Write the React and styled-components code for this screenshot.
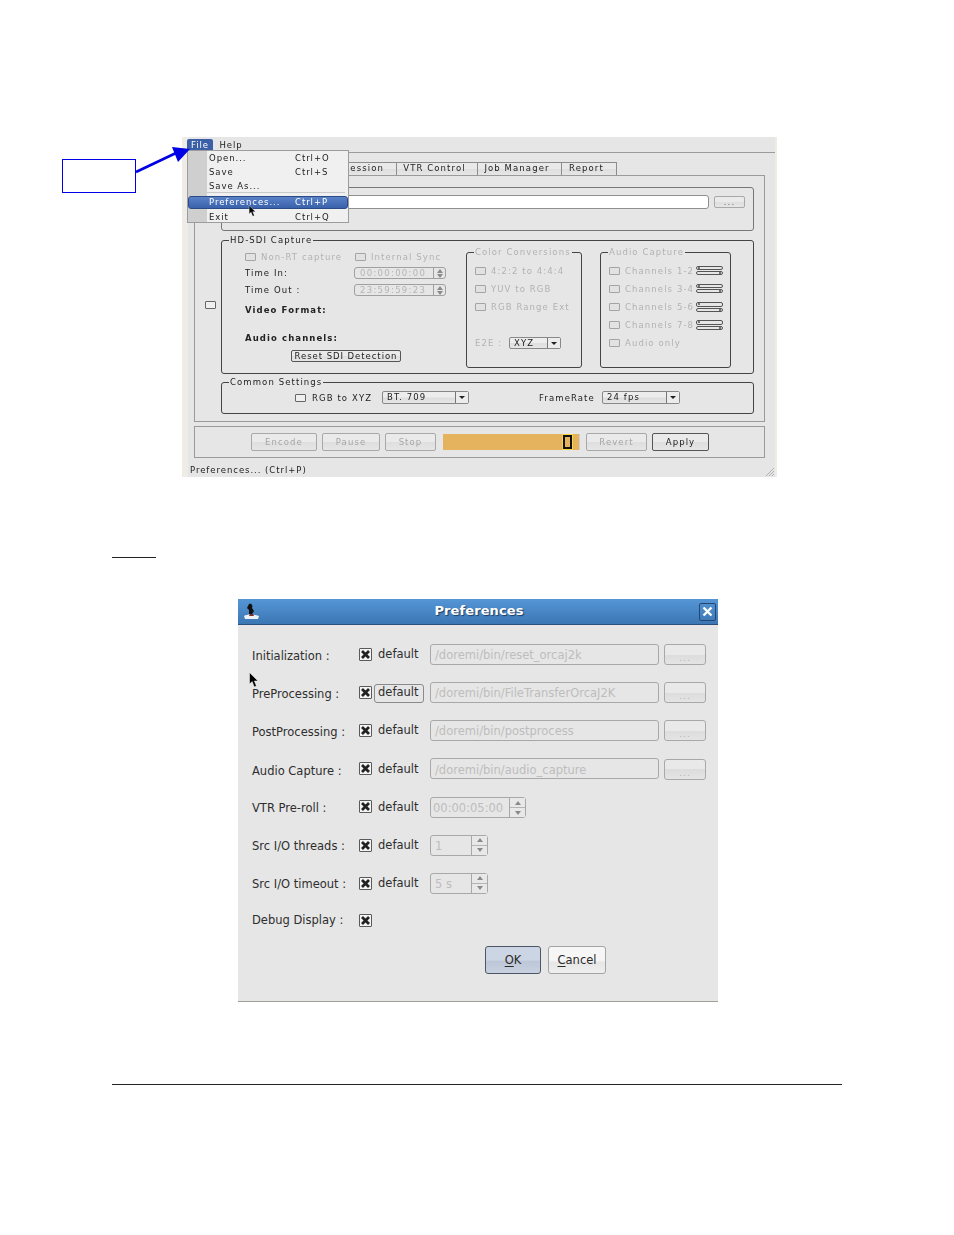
import React from 'react';
import styled, { createGlobalStyle } from 'styled-components';

const Global = createGlobalStyle`
  * { box-sizing: border-box; }
  html, body { margin: 0; padding: 0; background: #fff; }
`

const Page = styled.div`
  position: relative;
  width: 954px;
  height: 1235px;
  padding-top: 137px;
  background: #fff;
  font-family: "DejaVu Sans", sans-serif;
  overflow: hidden;
`

const TopRow = styled.div`
  display: flex;
  align-items: flex-start;
`

const Callout = styled.div`
  width: 74px;
  height: 34px;
  margin: 22px 46px 0 62px;
  border: 1px solid #0000e6;
`

const ArrowSvg = styled.svg`
  position: absolute;
  left: 130px;
  top: 140px;
  z-index: 5;
`

/* old qt app window, text is a bit soft because the shot was scaled */
const AppWindow = styled.div`
  position: relative;
  width: 595px;
  height: 340px;
  background: #e6e6e6;
  border-left: 6px solid #efece7;
  border-right: 2px solid #efece7;
  font-size: 8.5px;
  letter-spacing: 1.1px;
  color: #1c1c1c;
  filter: blur(0.3px);
`

const MenuBar = styled.div`
  display: flex;
  height: 16px;
  margin-left: 2px;
  padding-top: 2px;
  border-bottom: 1px solid #9b9b9b;
  letter-spacing: 0.95px;
`

const MenuTitle = styled.div`
  display: flex;
  align-items: center;
  justify-content: center;
  width: ${p => p.$w}px;
  height: 12px;
  margin-left: ${p => p.$ml || 0}px;
  border-radius: 2px 2px 0 0;
  background: ${p => (p.$active ? '#3b60a8' : 'transparent')};
  color: ${p => (p.$active ? '#fff' : '#222')};
`

const TabBar = styled.div`
  display: flex;
  height: 13px;
  margin-top: 9px;
  padding-left: 127px;
`

const Tab = styled.div`
  display: flex;
  align-items: center;
  justify-content: ${p => (p.$first ? 'flex-end' : 'center')};
  width: ${p => p.$w}px;
  height: 13px;
  padding: 0 ${p => (p.$first ? 12 : 5)}px 2px 0;
  border: 1px solid #8c8c8c;
  border-bottom: 0;
  border-left-width: ${p => (p.$first ? 1 : 0)}px;
  background: linear-gradient(#e9e9e9 50%, #dedede 50%, #e6e6e6);
`

const Pane = styled.div`
  display: flex;
  width: 571px;
  height: 247px;
  margin-left: 6px;
  border: 1px solid #9a9a9a;
`

const SideCol = styled.div`
  width: 26px;
  padding: 125px 0 0 10px;
`

const Stack = styled.div`
  display: flex;
  flex-direction: column;
  width: 533px;
  padding-top: 11px;
`

const Group = styled.div`
  position: relative;
  display: flex;
  width: ${p => (p.$w ? `${p.$w}px` : 'auto')};
  height: ${p => p.$h}px;
  margin-top: ${p => p.$mt || 0}px;
  border: 1px solid ${p => p.$line || '#444'};
  border-radius: 3px;
`

const Legend = styled.span`
  position: absolute;
  top: -6px;
  left: 7px;
  padding: 0 1px;
  background: #e6e6e6;
  line-height: 10px;
  white-space: nowrap;
  color: ${p => (p.$off ? '#b2b2b2' : '#222')};
`

const PathRow = styled.div`
  display: flex;
  align-items: flex-start;
  gap: 5px;
  padding: 7px 0 0 60px;
`

const PathInput = styled.div`
  width: 427px;
  height: 14px;
  background: #fff;
  border: 1px solid #8f8f8f;
  border-radius: 3px;
`

const SmallButton = styled.div`
  display: flex;
  align-items: center;
  justify-content: center;
  width: ${p => p.$w || 31}px;
  height: ${p => p.$h || 12}px;
  margin-top: ${p => p.$mt || 0}px;
  margin-left: ${p => p.$ml || 0}px;
  border: 1px solid ${p => (p.$off ? '#a8a8a8' : '#555')};
  border-radius: 2px;
  color: ${p => (p.$off ? '#a6a6a6' : '#1c1c1c')};
  background: linear-gradient(#eaeaea 50%, #dedede 50%, #e6e6e6);
  white-space: nowrap;
`

const Dots = styled.span`
  color: #666;
`

const ResetButton = styled(SmallButton)`
  letter-spacing: 0.95px;
`

const CaptureCol = styled.div`
  width: 244px;
  padding: 8px 0 0 23px;
`

const FormRow = styled.div`
  display: flex;
  align-items: center;
  height: ${p => p.$h || 16}px;
  margin-top: ${p => p.$mt || 0}px;
  padding-left: ${p => p.$pl || 0}px;
  white-space: nowrap;
`

const Cell = styled.span`
  display: flex;
  align-items: center;
  width: ${p => p.$w}px;
  margin-left: ${p => p.$ml || 0}px;
  color: ${p => (p.$off ? '#b2b2b2' : '#222')};
`

const BoldText = styled.span`
  font-weight: bold;
  color: #222;
`

const TinyCheck = styled.span`
  display: block;
  flex: none;
  width: 11px;
  height: 8px;
  margin-right: ${p => p.$gap || 5}px;
  border: 1px solid ${p => (p.$off ? '#a4a4a4' : '#666')};
  border-radius: 1px;
  background: ${p => (p.$off ? '#e2e2e2' : '#efefef')};
`

const TimeBox = styled.div`
  display: flex;
  width: 92px;
  height: 12px;
  border: 1px solid #a0a0a0;
  border-radius: 3px;
`

const TimeText = styled.span`
  flex: 1;
  padding-left: 5px;
  line-height: 10px;
  letter-spacing: 1.3px;
  color: #b4b4b4;
`

const TinyArrows = styled.span`
  display: flex;
  flex-direction: column;
  justify-content: space-around;
  align-items: center;
  width: 12px;
  border-left: 1px solid #a0a0a0;
  color: #333;
`

const CaptureBox = styled(Group)`
  flex-direction: column;
  margin-top: 11px;
  margin-left: ${p => p.$ml || 0}px;
  padding: 9px 0 0 8px;
`

const ChannelLabel = styled.span`
  width: 71px;
  color: #b2b2b2;
`

const Combo = styled.div`
  display: flex;
  width: ${p => p.$w}px;
  height: ${p => p.$h || 13}px;
  margin-left: ${p => p.$ml || 0}px;
  border: 1px solid #888;
  border-radius: 2px;
  background: linear-gradient(#ededed 45%, #dedede 55%, #e6e6e6);
`

const ComboText = styled.span`
  flex: 1;
  padding-left: 4px;
  line-height: 11px;
`

const ComboDrop = styled.span`
  display: flex;
  align-items: center;
  justify-content: center;
  width: 13px;
  border-left: 1px solid #777;
  background: #ececec;
`

const DropTri = styled.span`
  width: 0;
  height: 0;
  border-left: 3px solid transparent;
  border-right: 3px solid transparent;
  border-top: 3px solid #222;
`

const ControlBar = styled.div`
  display: flex;
  align-items: center;
  width: 571px;
  height: 32px;
  margin: 4px 0 0 6px;
  padding-left: 56px;
  border: 1px solid #9a9a9a;
`

const ActionButton = styled(SmallButton)`
  height: 18px;
  margin-left: ${p => p.$ml || 0}px;
`

const Progress = styled.div`
  display: flex;
  align-items: center;
  justify-content: flex-end;
  width: 137px;
  height: 16px;
  margin-left: 7px;
  padding-right: 7px;
  background: #e5b25d;
  border-right: 1px solid #cfcfcf;
`

const Marker = styled.span`
  width: 9px;
  height: 14px;
  border: 2px solid #111;
  outline: 1px solid #f5d63c;
  background: #e5b25d;
`

const StatusBar = styled.div`
  display: flex;
  align-items: center;
  height: 19px;
  margin-top: 2px;
  padding-left: 2px;
  letter-spacing: 0.95px;
`

const Grip = styled.svg`
  position: absolute;
  right: 0;
  bottom: 0;
`

const MenuPanel = styled.div`
  position: absolute;
  top: 13px;
  left: -1px;
  z-index: 3;
  width: 162px;
  height: 73px;
  background: linear-gradient(to right, #cfcfcf 19px, #f0f0f0 19px);
  border: 1px solid #9c9c9c;
  letter-spacing: 0.95px;
`

const MenuItem = styled.div`
  display: flex;
  align-items: center;
  height: ${p => p.$h || 14}px;
  padding-left: 21px;
  white-space: nowrap;
`

const MenuLabel = styled.span`
  width: 86px;
`

const MenuSep = styled.div`
  height: 1px;
  margin: 0 3px 3px 19px;
  background: #c9c9c9;
`

const MenuHot = styled(MenuItem)`
  height: 13px;
  margin-bottom: 1px;
  padding: 0 0 1px 20px;
  border: 1px solid #2c4a86;
  border-radius: 3px;
  color: #fff;
  background: linear-gradient(#5a82c8, #3a62ac);
`

const MouseSvg = styled.svg`
  position: absolute;
  left: ${p => p.$x}px;
  top: ${p => p.$y}px;
  z-index: 4;
`

const ShortRule = styled.div`
  width: 44px;
  height: 1px;
  margin: 80px 0 0 112px;
  background: #222;
`

const Dialog = styled.div`
  position: relative;
  width: 480px;
  height: 403px;
  margin: 41px 0 0 238px;
  background: #e6e6e6;
  border-bottom: 1px solid #a3a097;
  font-size: 11.5px;
  color: #2e2e2e;
`

const TitleBar = styled.div`
  display: flex;
  align-items: center;
  height: 26px;
  padding: 0 2px 0 5px;
  background: linear-gradient(#5596d6, #3c76b4);
  border-bottom: 1px solid #2b4f7c;
`

const Title = styled.span`
  flex: 1;
  padding: 0 2px 2px 0;
  text-align: center;
  font-weight: bold;
  font-size: 13px;
  letter-spacing: 0.1px;
  color: #fff;
  text-shadow: 1px 1px 1px #1d3c62;
`

const CloseBox = styled.span`
  display: flex;
  align-items: center;
  justify-content: center;
  width: 17px;
  height: 18px;
  border: 1px solid #24466f;
  border-radius: 2px;
`

const Rows = styled.div`
  padding: 10px 12px 0 14px;
`

const Row = styled.div`
  display: flex;
  align-items: center;
  height: ${p => p.$h || 38.2}px;
`

const RowLabel = styled.span`
  width: 107px;
  padding-top: ${p => p.$drop || 0}px;
  white-space: nowrap;
`

const XBox = styled.span`
  display: flex;
  align-items: center;
  justify-content: center;
  flex: none;
  width: 13px;
  height: 13px;
  border: 1px solid #5a5a5a;
  border-radius: 1px;
  background: #f4f4f4;
`

const DefaultText = styled.span`
  position: relative;
  width: 52px;
  margin-left: 6px;
  line-height: 14px;
  ${p => p.$focus && `
    &::after {
      content: '';
      position: absolute;
      left: -4px;
      top: -1px;
      width: 48px;
      height: 17px;
      border: 1px solid #8a8a8a;
      border-radius: 3px;
    }
  `}
`

const FieldBox = styled.div`
  display: flex;
  align-items: center;
  width: ${p => p.$w}px;
  height: 21px;
  padding: 2px 0 0 4px;
  border: 1px solid #a8a8a8;
  border-radius: 3px;
  color: #bdbdbd;
  white-space: nowrap;
  overflow: hidden;
`

const BrowseButton = styled.div`
  display: flex;
  align-items: flex-end;
  justify-content: center;
  width: 42px;
  height: 21px;
  margin: 1px 0 0 5px;
  padding-bottom: 1px;
  border: 1px solid #a8a8a8;
  border-radius: 3px;
  background: linear-gradient(#e9e9e9 50%, #dcdcdc 50%, #e4e4e4);
  color: #b4b4b4;
  font-size: 9px;
  letter-spacing: 1px;
`

const SpinBox = styled.div`
  display: flex;
  width: ${p => p.$w}px;
  height: 21px;
  margin-top: ${p => p.$mt || 0}px;
  border: 1px solid #a8a8a8;
  border-radius: 3px;
  color: #bdbdbd;
`

const SpinValue = styled.span`
  flex: 1;
  padding-left: ${p => p.$pad || 4}px;
  line-height: 20px;
  white-space: nowrap;
`

const SpinSide = styled.span`
  display: flex;
  flex-direction: column;
  width: 16px;
  border-left: 1px solid #a8a8a8;
`

const SpinStep = styled.span`
  flex: 1;
  display: flex;
  align-items: center;
  justify-content: center;
  background: #e8e8e8;
  border-top: ${p => (p.$lower ? '1px solid #b4b4b4' : '0')};
`

const Tri = styled.span`
  width: 0;
  height: 0;
  border-left: 3.5px solid transparent;
  border-right: 3.5px solid transparent;
  border-bottom: ${p => (p.$down ? '0' : '4px solid #8a8a8a')};
  border-top: ${p => (p.$down ? '4px solid #8a8a8a' : '0')};
`

const DialogButtons = styled.div`
  display: flex;
  gap: 7px;
  margin: 7px 0 0 247px;
`

const DialogButton = styled.div`
  display: flex;
  align-items: center;
  justify-content: center;
  width: ${p => p.$w}px;
  height: 28px;
  border: 1px solid ${p => (p.$primary ? '#4b5668' : '#a4a4a4')};
  border-radius: 3px;
  color: #2a2a2a;
  background: ${p => (p.$primary
    ? 'linear-gradient(#ccd5e3 50%, #bdc7d8 55%, #c8d1df)'
    : 'linear-gradient(#f6f6f6 50%, #e6e6e6 60%, #efefef)')};
`

const Under = styled.u`
  text-underline-offset: 2px;
`

const FootRule = styled.div`
  width: 730px;
  height: 1px;
  margin: 82px 0 0 112px;
  background: #222;
`

function Pills({ open }) {
  const firstH = open ? 4 : 3
  const secondY = open ? 6.5 : 5.5
  return (
    <svg width="27" height="10" viewBox="0 0 27 10" fill="#e6e6e6" stroke="#555" strokeWidth="1">
      <rect x="0.5" y="0.5" width="26" height={firstH} rx="1.5" />
      <rect x="0.5" y={secondY} width="26" height="3" rx="1.5" />
      <circle cx="3" cy="2" r="0.6" fill="#333" />
      <circle cx="24" cy={secondY + 1.5} r="0.6" fill="#333" />
    </svg>
  )
}

function TimeField({ value }) {
  return (
    <TimeBox>
      <TimeText>{value}</TimeText>
      <TinyArrows>
        <Tri />
        <Tri $down />
      </TinyArrows>
    </TimeBox>
  )
}

function XMark() {
  return (
    <svg width="9" height="9" viewBox="0 0 9 9">
      <path d="M1 1 L8 8 M8 1 L1 8" stroke="#222" strokeWidth="2.8" />
    </svg>
  )
}

function Mouse({ x, y, w, h }) {
  return (
    <MouseSvg $x={x} $y={y} width={w} height={h} viewBox="0 0 10 16">
      <path d="M0.5 0.5 L0.5 12 L3.2 9.6 L5.2 15 L7.4 14 L5.4 9 L9 9 Z" fill="#000" stroke="#fff" strokeWidth="0.5" />
    </MouseSvg>
  )
}

function Spin({ w, value, pad, mt }) {
  return (
    <SpinBox $w={w} $mt={mt}>
      <SpinValue $pad={pad}>{value}</SpinValue>
      <SpinSide>
        <SpinStep><Tri /></SpinStep>
        <SpinStep $lower><Tri $down /></SpinStep>
      </SpinSide>
    </SpinBox>
  )
}

const pathRows = [
  { label: 'Initialization :', path: '/doremi/bin/reset_orcaj2k', drop: 4 },
  { label: 'PreProcessing :', path: '/doremi/bin/FileTransferOrcaJ2K', drop: 4, focus: true },
  { label: 'PostProcessing :', path: '/doremi/bin/postprocess', drop: 4 },
  { label: 'Audio Capture :', path: '/doremi/bin/audio_capture', drop: 4 },
]

const spinRows = [
  { label: 'VTR Pre-roll :', w: 96, value: '00:00:05:00', pad: 2, drop: 2, mt: 2 },
  { label: 'Src I/O threads :', w: 58, value: '1', drop: 2 },
  { label: 'Src I/O timeout :', w: 58, value: '5 s', drop: 2 },
]

const channels = [
  { name: 'Channels 1-2' },
  { name: 'Channels 3-4' },
  { name: 'Channels 5-6', open: true },
  { name: 'Channels 7-8', open: true },
]

export default function App() {
  return (
    <Page>
      <Global />
      <TopRow>
        <Callout />
        <AppWindow>
          <MenuBar>
            <MenuTitle $w={26} $ml={-3} $active>File</MenuTitle>
            <MenuTitle $w={26} $ml={5}>Help</MenuTitle>
          </MenuBar>
          <TabBar>
            <Tab $w={82} $first>ession</Tab>
            <Tab $w={81}>VTR Control</Tab>
            <Tab $w={84}>Job Manager</Tab>
            <Tab $w={55}>Report</Tab>
          </TabBar>
          <Pane>
            <SideCol>
              <TinyCheck />
            </SideCol>
            <Stack>
              <Group $h={44} $line="#777">
                <PathRow>
                  <PathInput />
                  <SmallButton $off $mt={1}><Dots>...</Dots></SmallButton>
                </PathRow>
              </Group>
              <Group $h={134} $mt={9}>
                <Legend>HD-SDI Capture</Legend>
                <CaptureCol>
                  <FormRow>
                    <Cell $w={110} $off><TinyCheck $off />Non-RT capture</Cell>
                    <Cell $w={100} $off><TinyCheck $off />Internal Sync</Cell>
                  </FormRow>
                  <FormRow>
                    <Cell $w={109}>Time In:</Cell>
                    <TimeField value="00:00:00:00" />
                  </FormRow>
                  <FormRow $h={18}>
                    <Cell $w={109}>Time Out :</Cell>
                    <TimeField value="23:59:59:23" />
                  </FormRow>
                  <FormRow $h={22}><BoldText>Video Format:</BoldText></FormRow>
                  <FormRow $h={22} $mt={6}><BoldText>Audio channels:</BoldText></FormRow>
                  <ResetButton $w={110} $ml={46} $mt={1}>Reset SDI Detection</ResetButton>
                </CaptureCol>
                <CaptureBox $w={116} $h={116}>
                  <Legend $off>Color Conversions</Legend>
                  <FormRow $h={18}><Cell $w={100} $off><TinyCheck $off />4:2:2 to 4:4:4</Cell></FormRow>
                  <FormRow $h={18}><Cell $w={100} $off><TinyCheck $off />YUV to RGB</Cell></FormRow>
                  <FormRow $h={18}><Cell $w={100} $off><TinyCheck $off />RGB Range Ext</Cell></FormRow>
                  <FormRow $h={18} $mt={18}>
                    <Cell $w={34} $off>E2E :</Cell>
                    <Combo $w={52} $h={12}><ComboText>XYZ</ComboText><ComboDrop><DropTri /></ComboDrop></Combo>
                  </FormRow>
                </CaptureBox>
                <CaptureBox $w={131} $h={116} $ml={18}>
                  <Legend $off>Audio Capture</Legend>
                  {channels.map(ch => (
                    <FormRow $h={18} key={ch.name}>
                      <TinyCheck $off />
                      <ChannelLabel>{ch.name}</ChannelLabel>
                      <Pills open={ch.open} />
                    </FormRow>
                  ))}
                  <FormRow $h={18}><TinyCheck $off /><ChannelLabel>Audio only</ChannelLabel></FormRow>
                </CaptureBox>
              </Group>
              <Group $h={32} $mt={8}>
                <Legend>Common Settings</Legend>
                <FormRow $h={29} $pl={73}>
                  <TinyCheck $gap={6} />
                  <Cell $w={70}>RGB to XYZ</Cell>
                  <Combo $w={87}><ComboText>BT. 709</ComboText><ComboDrop><DropTri /></ComboDrop></Combo>
                  <Cell $w={63} $ml={70}>FrameRate</Cell>
                  <Combo $w={78}><ComboText>24 fps</ComboText><ComboDrop><DropTri /></ComboDrop></Combo>
                </FormRow>
              </Group>
            </Stack>
          </Pane>
          <ControlBar>
            <ActionButton $off $w={66}>Encode</ActionButton>
            <ActionButton $off $w={58} $ml={5}>Pause</ActionButton>
            <ActionButton $off $w={51} $ml={5}>Stop</ActionButton>
            <Progress><Marker /></Progress>
            <ActionButton $off $w={61} $ml={6}>Revert</ActionButton>
            <ActionButton $w={57} $ml={5}>Apply</ActionButton>
          </ControlBar>
          <StatusBar>Preferences... (Ctrl+P)</StatusBar>
          <Grip width="10" height="10" viewBox="0 0 10 10">
            <path d="M9 1 L1 9 M9 4 L4 9 M9 7 L7 9" stroke="#b0b0b0" strokeWidth="1" />
          </Grip>
          <MenuPanel>
            <MenuItem><MenuLabel>Open...</MenuLabel>Ctrl+O</MenuItem>
            <MenuItem><MenuLabel>Save</MenuLabel>Ctrl+S</MenuItem>
            <MenuItem $h={13}><MenuLabel>Save As...</MenuLabel></MenuItem>
            <MenuSep />
            <MenuHot><MenuLabel>Preferences...</MenuLabel>Ctrl+P</MenuHot>
            <MenuItem><MenuLabel>Exit</MenuLabel>Ctrl+Q</MenuItem>
          </MenuPanel>
          <Mouse x={60} y={68} w={9} h={12} />
        </AppWindow>
      </TopRow>
      <ArrowSvg width="64" height="36" viewBox="0 0 64 36">
        <path d="M6 32 L46 13" stroke="#0000e6" strokeWidth="2.6" />
        <path d="M60 9 L42 7 L48 22 Z" fill="#0000e6" />
      </ArrowSvg>

      <ShortRule />
      <Dialog>
        <TitleBar>
          <svg width="18" height="17" viewBox="0 0 18 17">
            <path d="M6 1 C9 0 10 3 9 5 L11 8 L9 11 L6 11 L6 7 L4 5 Z" fill="#111" />
            <path d="M1 13 C4 11 11 11 16 13 L15 16 L2 16 Z" fill="#eef2f6" />
            <path d="M7 11 L10 11 L11 13 L6 13 Z" fill="#7a2b2b" />
          </svg>
          <Title>Preferences</Title>
          <CloseBox>
            <svg width="11" height="11" viewBox="0 0 11 11">
              <path d="M1.5 1.5 L9.5 9.5 M9.5 1.5 L1.5 9.5" stroke="#fff" strokeWidth="2.4" />
            </svg>
          </CloseBox>
        </TitleBar>
        <Mouse x={11} y={73} w={10} h={16} />
        <Rows>
          {pathRows.map(r => (
            <Row key={r.label}>
              <RowLabel $drop={r.drop}>{r.label}</RowLabel>
              <XBox><XMark /></XBox>
              <DefaultText $focus={r.focus}>default</DefaultText>
              <FieldBox $w={229}>{r.path}</FieldBox>
              <BrowseButton>...</BrowseButton>
            </Row>
          ))}
          {spinRows.map(r => (
            <Row key={r.label}>
              <RowLabel $drop={r.drop}>{r.label}</RowLabel>
              <XBox><XMark /></XBox>
              <DefaultText>default</DefaultText>
              <Spin w={r.w} value={r.value} pad={r.pad} mt={r.mt} />
            </Row>
          ))}
          <Row $h={36.2}>
            <RowLabel>Debug Display :</RowLabel>
            <XBox><XMark /></XBox>
          </Row>
        </Rows>
        <DialogButtons>
          <DialogButton $w={56} $primary><span><Under>O</Under>K</span></DialogButton>
          <DialogButton $w={58}><span><Under>C</Under>ancel</span></DialogButton>
        </DialogButtons>
      </Dialog>
      <FootRule />
    </Page>
  )
}
